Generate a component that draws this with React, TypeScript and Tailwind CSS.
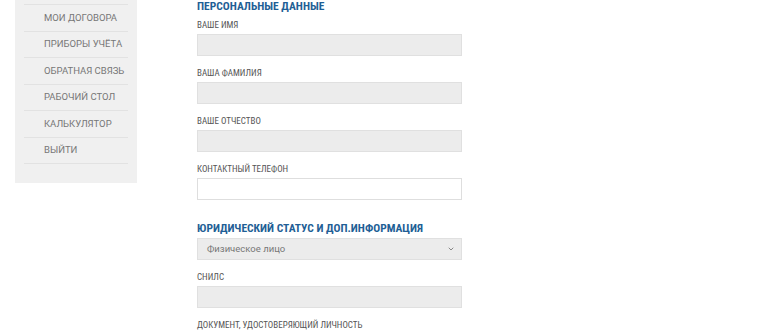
import { ChevronDown } from 'lucide-react'

const MENU = ['МОИ ДОГОВОРА', 'ПРИБОРЫ УЧЁТА', 'ОБРАТНАЯ СВЯЗЬ', 'РАБОЧИЙ СТОЛ', 'КАЛЬКУЛЯТОР', 'ВЫЙТИ']

function Label({ children }: { children: React.ReactNode }) {
  return (
    <div className="h-[12px] leading-[12px] text-[9px] text-[#555] uppercase font-stretch-condensed mb-[3px]">
      {children}
    </div>
  )
}

function Field({ label, white }: { label: string; white?: boolean }) {
  return (
    <div className="mb-[11px]">
      <Label>{label}</Label>
      <div
        className={`h-[22px] border ${white ? 'bg-white border-[#dedede]' : 'bg-[#ececec] border-[#e0e0e0]'}`}
      />
    </div>
  )
}

function Heading({ children }: { children: React.ReactNode }) {
  return (
    <h2 className="h-[14px] leading-[14px] text-[11.5px] font-bold text-[#1f5f96] font-stretch-condensed">
      {children}
    </h2>
  )
}

export default function App() {
  return (
    <div className="w-[770px] h-[330px] overflow-hidden bg-white font-['Roboto',sans-serif]">
      <div className="flex items-start">
        {/* Sidebar */}
        <aside className="ml-[15px] w-[122px] bg-[#f0f0f0] px-[9px] pt-[4px] pb-[19px]">
          <div className="border-t border-[#e2e2e2]" />
          {MENU.map((m) => (
            <div
              key={m}
              className="h-[26.5px] border-b border-[#e2e2e2] flex items-center pl-[20px] text-[9.5px] text-[#777]"
            >
              {m}
            </div>
          ))}
        </aside>

        {/* Form */}
        <main className="ml-[60px] w-[265px] -mt-[1px]">
          <Heading>ПЕРСОНАЛЬНЫЕ ДАННЫЕ</Heading>
          <div className="h-[6px]" />
          <Field label="Ваше имя" />
          <Field label="Ваша фамилия" />
          <Field label="Ваше отчество" />
          <Field label="Контактный телефон" white />
          <div className="h-[10px]" />
          <Heading>ЮРИДИЧЕСКИЙ СТАТУС И ДОП.ИНФОРМАЦИЯ</Heading>
          <div className="h-[3px]" />
          <div className="mb-[11px] h-[22px] bg-[#ececec] border border-[#e0e0e0] flex items-center justify-between pl-[9px] pr-[6px]">
            <span className="text-[9.5px] text-[#777]">Физическое лицо</span>
            <ChevronDown className="w-[8px] h-[8px] text-[#888]" strokeWidth={3} />
          </div>
          <Field label="СНИЛС" />
          <Label>Документ, удостоверяющий личность</Label>
        </main>
      </div>
    </div>
  )
}
